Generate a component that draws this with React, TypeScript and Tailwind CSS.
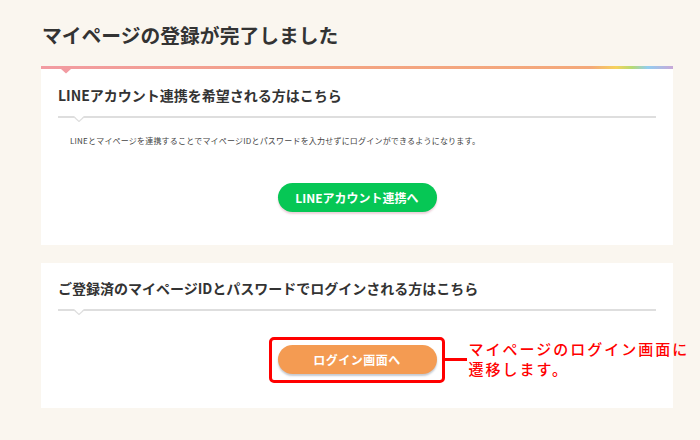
import React from 'react';

const Divider = () => (
  <div className="relative mt-[11px] h-[2px] bg-[#dedede]">
    {/* small downward notch */}
    <svg className="absolute left-[16px] top-0" width="10" height="6" viewBox="0 0 10 6">
      <polygon points="0,0 5,5 10,0" fill="#ffffff" />
      <polyline points="0,1 5,5.5 10,1" fill="none" stroke="#dedede" strokeWidth="1.2" />
    </svg>
  </div>
);

const App = () => {
  return (
    <div className="min-h-[440px] w-full bg-[#faf6ef] font-['Noto_Sans_CJK_JP',sans-serif] text-[#333]">
      <div className="ml-[41px] w-[632px] pt-[21px]">
        <h1 className="pl-[1px] text-[19.8px] font-bold leading-[28px]">マイページの登録が完了しました</h1>

        {/* colour bar */}
        <div className="relative mt-[17px] h-[3px] bg-[linear-gradient(90deg,#f29ba2_0%,#f3a383_45%,#f4a97a_87%,#f6d25c_91%,#b5da72_93.5%,#92cdf0_96%,#c8a8d8_100%)]">
          <svg className="absolute left-[20px] top-[3px]" width="10" height="5" viewBox="0 0 10 5">
            <polygon points="0,0 5,4.5 10,0" fill="#f29ba2" />
          </svg>
        </div>

        {/* LINE card */}
        <section className="bg-white px-[17px] pb-[33px] pt-[16px]">
          <h2 className="text-[14px] font-bold leading-[20px]">LINEアカウント連携を希望される方はこちら</h2>
          <Divider />
          <p className="mt-[17px] pl-[12px] text-[8px] leading-[12px] tracking-[0.2px] text-[#444]">
            LINEとマイページを連携することでマイページIDとパスワードを入力せずにログインができるようになります。
          </p>
          <div className="mt-[36px] flex justify-center">
            <button className="h-[29px] w-[159px] rounded-full bg-[#06c755] text-[12px] font-bold text-white shadow-[0_2px_2px_rgba(200,120,150,0.35)]">
              LINEアカウント連携へ
            </button>
          </div>
        </section>

        {/* login card */}
        <section className="mt-[18px] bg-white px-[17px] pb-[34px] pt-[15px]">
          <h2 className="text-[14px] font-bold leading-[20px]">ご登録済のマイページIDとパスワードでログインされる方はこちら</h2>
          <Divider />
          <div className="mt-[34px] flex justify-center">
            <div className="relative">
              <button className="h-[29px] w-[159px] rounded-full bg-[#f49b52] text-[12px] font-bold tracking-[0.5px] text-white shadow-[0_2px_2px_rgba(90,100,120,0.35)]">
                ログイン画面へ
              </button>
              {/* red annotation */}
              <div className="absolute -left-[9px] -top-[8px] h-[46px] w-[176px] rounded-[5px] border-[3px] border-[#ff0000]" />
              <div className="absolute left-[167px] top-[13px] h-[3px] w-[22px] bg-[#ff0000]" />
              <p className="absolute left-[191px] -top-[6px] w-[240px] text-[15px] font-medium leading-[20px] tracking-[2px] text-[#ff0000]">
                マイページのログイン画面に
                <br />
                遷移します。
              </p>
            </div>
          </div>
        </section>
      </div>
    </div>
  );
};

export default App;
